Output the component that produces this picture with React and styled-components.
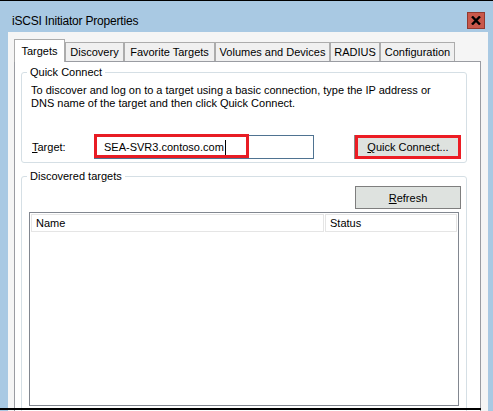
import styled, { createGlobalStyle } from "styled-components";

const GlobalStyle = createGlobalStyle`
  html, body {
    margin: 0;
    padding: 0;
    background: #fff;
  }
  body {
    font-family: "Liberation Sans", Arial, sans-serif;
    color: #000;
  }
`;

const tabs = [
  { label: "Targets", width: 51, active: true },
  { label: "Discovery", width: 59 },
  { label: "Favorite Targets", width: 91 },
  { label: "Volumes and Devices", width: 115 },
  { label: "RADIUS", width: 50 },
  { label: "Configuration", width: 75 },
];

export default function App() {
  return (
    <>
      <GlobalStyle />
      <Window>
        <TitleBar>
          <Title>iSCSI Initiator Properties</Title>
          <CloseButton>
            <svg width="10" height="9" viewBox="0 0 10 9">
              <path d="M1 0.5 L9 8.5 M9 0.5 L1 8.5" stroke="#000" strokeWidth="2.4" />
            </svg>
          </CloseButton>
        </TitleBar>

        <Client>
          <TabStrip>
            {tabs.map((t) => (
              <Tab key={t.label} $w={t.width} $active={t.active}>
                {t.label}
              </Tab>
            ))}
          </TabStrip>

          <Panel>
            <GroupBox>
              <GroupTitle>Quick Connect</GroupTitle>
              <Description>
                To discover and log on to a target using a basic connection, type the IP address or
                <br />
                DNS name of the target and then click Quick Connect.
              </Description>
              <Row>
                <FieldLabel>
                  <Mn>T</Mn>arget:
                </FieldLabel>
                <InputBox>
                  SEA-SVR3.contoso.com
                  <Caret />
                  <Highlight />
                </InputBox>
                <QuickButton>
                  <Mn>Q</Mn>uick Connect...
                </QuickButton>
              </Row>
            </GroupBox>

            <GroupBox $top={13} $column>
              <GroupTitle>
                Discovered tar<Mn>g</Mn>ets
              </GroupTitle>
              <RefreshButton>
                <Mn>R</Mn>efresh
              </RefreshButton>
              <List>
                <Header>
                  <HeaderCell>Name</HeaderCell>
                  <HeaderCell>Status</HeaderCell>
                </Header>
              </List>
            </GroupBox>
          </Panel>
        </Client>

        <BottomEdge />
      </Window>
    </>
  );
}

const Window = styled.div`
  position: relative;
  width: 493px;
  height: 411px;
  box-sizing: border-box;
  overflow: hidden;
  background: #a9c9e3;
  border-top: 1px solid #000;
  display: flex;
  flex-direction: column;
`;

const TitleBar = styled.div`
  height: 31px;
  flex-shrink: 0;
  box-sizing: border-box;
  display: flex;
  justify-content: space-between;
  align-items: flex-start;
  padding: 0 8px 0 12px;
`;

const Title = styled.div`
  margin-top: 13px;
  font-size: 12px;
  line-height: 15px;
  letter-spacing: -0.2px;
`;

const CloseButton = styled.div`
  margin-top: 11px;
  width: 18px;
  height: 17px;
  box-sizing: border-box;
  background: #c9584b;
  border: 1px solid #93392f;
  display: flex;
  align-items: center;
  justify-content: center;
`;

const Client = styled.div`
  flex: 1;
  min-height: 0;
  margin: 0 5px 0 8px;
  padding: 7px 0 0 6px;
  background: #f5f5f5;
`;

const TabStrip = styled.div`
  display: flex;
  align-items: flex-end;
  height: 22px;
`;

const Tab = styled.div`
  position: relative;
  z-index: ${(p) => (p.$active ? 1 : 0)};
  width: ${(p) => p.$w}px;
  height: ${(p) => (p.$active ? 23 : 19)}px;
  margin-bottom: ${(p) => (p.$active ? -1 : 0)}px;
  box-sizing: border-box;
  border: 1px solid #acacac;
  border-bottom: none;
  background: ${(p) => (p.$active ? "#fff" : "#f0f0f0")};
  font-size: 11px;
  display: flex;
  align-items: center;
  justify-content: center;
  padding-bottom: ${(p) => (p.$active ? 1 : 0)}px;
  white-space: nowrap;
`;

const Panel = styled.div`
  position: relative;
  width: 467px;
  height: 380px;
  box-sizing: border-box;
  border: 1px solid #9a9ca2;
  background: #fff;
  padding: 10px 0 0 6px;
`;

const GroupBox = styled.div`
  width: 446px;
  box-sizing: border-box;
  margin-top: ${(p) => p.$top || 0}px;
  border: 1px solid #d5dfe5;
  border-radius: 3px;
  padding-bottom: 3px;
  display: flex;
  flex-direction: column;
  ${(p) => p.$column && "height: 300px;"}
`;

const GroupTitle = styled.div`
  align-self: flex-start;
  margin: -7px 0 0 5px;
  padding: 0 3px;
  background: #fff;
  font-size: 11px;
  line-height: 13px;
`;

const Description = styled.p`
  margin: 5px 0 0 9px;
  font-size: 11px;
  line-height: 13px;
  white-space: nowrap;
`;

const Row = styled.div`
  display: flex;
  align-items: center;
  margin: 25px 5px 0 10px;
`;

const FieldLabel = styled.div`
  width: 62px;
  font-size: 11px;
`;

const Mn = styled.span`
  text-decoration: underline;
`;

const InputBox = styled.div`
  position: relative;
  width: 220px;
  height: 24px;
  box-sizing: border-box;
  border: 1px solid #4f7391;
  background: #fff;
  display: flex;
  align-items: center;
  padding-left: 9px;
  font-size: 11px;
  white-space: nowrap;
`;

const Caret = styled.span`
  display: inline-block;
  width: 1px;
  height: 15px;
  margin-left: 1px;
  background: #000;
`;

const Highlight = styled.div`
  position: absolute;
  left: -1px;
  top: -2px;
  width: 155px;
  height: 24px;
  box-sizing: border-box;
  border: 3px solid #e81c24;
  pointer-events: none;
`;

const QuickButton = styled.div`
  margin-left: auto;
  width: 106px;
  height: 24px;
  box-sizing: border-box;
  background: #dee2df;
  border: 3px solid #ec1c24;
  box-shadow: -1px 0 0 #8a8a8a;
  font-size: 11px;
  display: flex;
  align-items: center;
  justify-content: center;
`;

const RefreshButton = styled.div`
  align-self: flex-end;
  margin: 3px 5px 0 0;
  width: 106px;
  height: 23px;
  box-sizing: border-box;
  background: #dee2df;
  border: 1px solid #7e7e7e;
  font-size: 11px;
  display: flex;
  align-items: center;
  justify-content: center;
`;

const List = styled.div`
  margin: 3px 0 0 7px;
  width: 430px;
  height: 194px;
  box-sizing: border-box;
  border: 1px solid #828790;
  padding: 1px;
  background: #fff;
`;

const Header = styled.div`
  display: grid;
  grid-template-columns: 293px 1fr;
  gap: 1px;
  height: 18px;
`;

const HeaderCell = styled.div`
  box-sizing: border-box;
  border: 1px solid #e5e5e5;
  padding-left: 4px;
  font-size: 11px;
  display: flex;
  align-items: center;
`;

const BottomEdge = styled.div`
  position: absolute;
  left: 0;
  top: 407px;
  width: 481px;
  height: 2px;
  background: #000;
`;
